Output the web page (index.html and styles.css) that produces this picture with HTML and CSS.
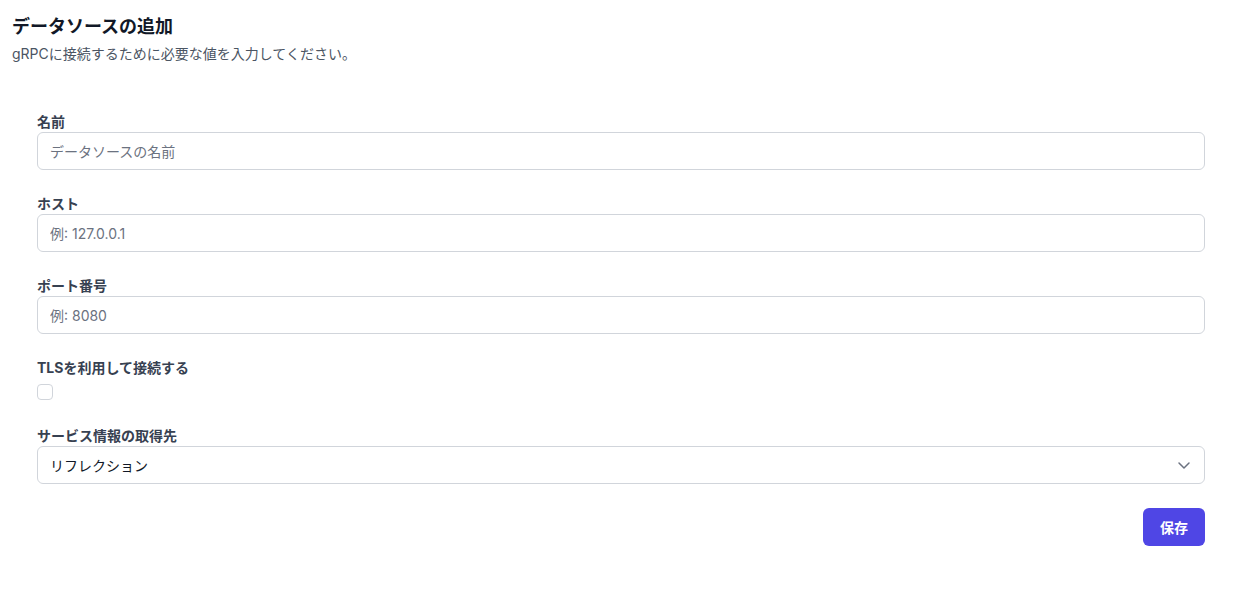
FILE: index.html
```html
<!DOCTYPE html>
<html lang="ja">
<head>
<meta charset="utf-8">
<link rel="stylesheet" href="styles.css">
</head>
<body>
<div class="page">
  <header class="header">
    <h1 class="title">データソースの追加</h1>
    <p class="subtitle">gRPCに接続するために必要な値を入力してください。</p>
  </header>
  <form class="form">
    <div class="field">
      <label class="label">名前</label>
      <input class="input" type="text" placeholder="データソースの名前">
    </div>
    <div class="field">
      <label class="label">ホスト</label>
      <input class="input" type="text" placeholder="例: 127.0.0.1">
    </div>
    <div class="field">
      <label class="label">ポート番号</label>
      <input class="input" type="text" placeholder="例: 8080">
    </div>
    <div class="field">
      <label class="label">TLSを利用して接続する</label>
      <span class="checkbox"></span>
    </div>
    <div class="field">
      <label class="label">サービス情報の取得先</label>
      <div class="select">
        <span>リフレクション</span>
        <svg class="chevron" width="20" height="20" viewBox="0 0 20 20" fill="none" stroke="#6b7280" stroke-width="1.5" stroke-linecap="round" stroke-linejoin="round"><path d="M5 8l5 5 5-5"/></svg>
      </div>
    </div>
    <div class="actions">
      <button class="button" type="button">保存</button>
    </div>
  </form>
</div>
</body>
</html>
```
FILE: styles.css
```css
* { box-sizing: border-box; }
body {
  margin: 0;
  background: #ffffff;
  font-family: "Inter", "Noto Sans CJK JP", sans-serif;
  color: #111827;
}
.page {
  padding: 14px 12px 0 12px;
}
.header { margin: 0; }
.title {
  margin: 0;
  font-size: 18px;
  line-height: 26px;
  font-weight: 700;
  color: #111827;
}
.subtitle {
  margin: 4px 0 0 0;
  font-size: 14px;
  line-height: 20px;
  color: #4b5563;
}
.form {
  margin-top: 48px;
  padding: 0 26px 0 25px;
  display: flex;
  flex-direction: column;
  gap: 24px;
}
.field {
  display: flex;
  flex-direction: column;
}
.label {
  font-size: 14px;
  line-height: 20px;
  font-weight: 700;
  color: #374151;
}
.input, .select {
  height: 38px;
  border: 1px solid #d1d5db;
  border-radius: 6px;
  padding: 0 12px;
  font-family: inherit;
  font-size: 14px;
  color: #111827;
  background: #fff;
  outline: none;
}
.input::placeholder { color: #6b7280; }
.checkbox {
  display: block;
  width: 16px;
  height: 16px;
  border: 1px solid #d1d5db;
  border-radius: 4px;
  margin: 6px 0 2px 0;
}
.select {
  display: flex;
  align-items: center;
  justify-content: space-between;
  padding-right: 10px;
}
.actions {
  display: flex;
  justify-content: flex-end;
}
.button {
  width: 62px;
  height: 38px;
  border: none;
  border-radius: 6px;
  background: #4f46e5;
  color: #fff;
  font-family: inherit;
  font-size: 14px;
  font-weight: 600;
}
```
